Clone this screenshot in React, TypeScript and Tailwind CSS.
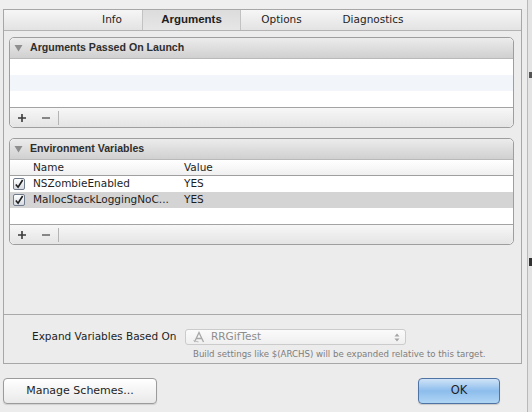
import React from 'react';

const font = { fontFamily: '"DejaVu Sans", "Liberation Sans", sans-serif' };
const boldFont = { fontFamily: '"Liberation Sans", Arial, sans-serif' };

function Triangle() {
  return (
    <svg aria-hidden="true" width="9" height="8" viewBox="0 0 9 8" className="shrink-0">
      <path d="M0.5 1h8L4.5 7.5z" fill="#8e8e8e" />
    </svg>
  );
}

function PanelHeader({ title }: { title: string }) {
  return (
    <div
      className="flex h-[21px] items-center gap-[7px] rounded-t-[5px] border-b border-[#b9b9b9] bg-gradient-to-b from-[#ececec] to-[#d0d0d0] pl-[4px] text-[10.6px] font-bold text-[#2e2e2e]"
      style={boldFont}
    >
      <Triangle />
      <span>{title}</span>
    </div>
  );
}

function PanelFooter() {
  return (
    <div className="flex h-[20px] items-center rounded-b-[5px] border-t border-[#a3a3a3] bg-gradient-to-b from-[#f7f7f7] to-[#e4e4e4] pl-[7px]">
      <svg aria-hidden="true" width="10" height="10" viewBox="0 0 10 10">
        <path d="M5 1v8M1 5h8" stroke="#3a3a3a" strokeWidth="1.6" />
      </svg>
      <svg aria-hidden="true" width="10" height="10" viewBox="0 0 10 10" className="ml-[14px]">
        <path d="M1 5h8" stroke="#5a5a5a" strokeWidth="1.4" />
      </svg>
      <div className="ml-[7px] h-[14px] w-px bg-[#b4b4b4]" />
    </div>
  );
}

function Check() {
  return (
    <div className="flex h-[12px] w-[12px] items-center justify-center rounded-[2px] border border-[#6f7b8c] bg-gradient-to-b from-[#ffffff] to-[#d6dbe2]">
      <svg aria-hidden="true" width="11" height="11" viewBox="0 0 11 11">
        <path d="M2 5.5l2.5 3L9.5 0.5" fill="none" stroke="#1f1f1f" strokeWidth="1.8" />
      </svg>
    </div>
  );
}

const envVars = [
  { name: 'NSZombieEnabled', value: 'YES', selected: false },
  { name: 'MallocStackLoggingNoC...', value: 'YES', selected: true }
];

export default function App() {
  return (
    <div className="flex h-[412px] w-[532px] overflow-hidden bg-[#ececec] text-[#1e1e1e]" style={font}>
      <div className="flex w-[527px] flex-col">
        <div className="h-[9px] bg-[#efefef]" />

        <div className="ml-[3px] flex h-[355px] w-[519px] flex-col border border-[#a7a7a7]">
          {/* tab bar */}
          <div className="flex h-[21px] border-b border-[#b3b3b3] bg-gradient-to-b from-[#f6f6f6] to-[#e3e3e3] pl-[78px] text-[10.5px]">
            <div className="flex w-[60px] items-center justify-center">Info</div>
            <div
              className="flex w-[99px] items-center justify-center border-x border-[#c2c2c2] bg-gradient-to-b from-[#dcdcdc] to-[#e6e6e6] text-[11.5px] font-bold"
              style={boldFont}
            >
              Arguments
            </div>
            <div className="flex w-[81px] items-center justify-center">Options</div>
            <div className="flex w-[102px] items-center justify-center">Diagnostics</div>
          </div>

          <div className="flex flex-1 flex-col pl-[5px] pr-[7px] pt-[6px]">
            {/* arguments panel */}
            <div className="rounded-[5px] border border-[#9e9e9e] bg-white">
              <PanelHeader title="Arguments Passed On Launch" />
              <div className="h-[16px] bg-white" />
              <div className="h-[16px] bg-[#f2f5fa]" />
              <div className="h-[16px] bg-white" />
              <PanelFooter />
            </div>

            {/* environment panel */}
            <div className="mt-[10px] rounded-[5px] border border-[#9e9e9e] bg-white">
              <PanelHeader title="Environment Variables" />
              <div className="flex h-[16px] items-center border-b border-[#9f9f9f] bg-gradient-to-b from-[#ffffff] to-[#f0f0f0] text-[10.5px]">
                <span className="w-[174px] pl-[23px]">Name</span>
                <span>Value</span>
              </div>
              {envVars.map((v) => (
                <div
                  key={v.name}
                  className={`flex h-[16px] items-center text-[10.5px] ${v.selected ? 'bg-[#d4d4d4]' : 'bg-white'}`}
                >
                  <div className="w-[23px] pl-[3px]">
                    <Check />
                  </div>
                  <span className="w-[151px] whitespace-nowrap">{v.name}</span>
                  <span>{v.value}</span>
                </div>
              ))}
              <div className="h-[16px] bg-white" />
              <PanelFooter />
            </div>

            <div className="flex-1" />
          </div>

          {/* expand variables section */}
          <div className="flex h-[49px] flex-col border-t border-[#a9a9a9] pl-[28px] pt-[14px]">
            <div className="flex items-center">
              <span className="w-[153px] text-[10.5px]">Expand Variables Based On</span>
              <div className="flex h-[16px] w-[221px] items-center rounded-[3px] border border-[#cbcbcb] bg-gradient-to-b from-[#fbfbfb] to-[#efefef] pl-[7px] pr-[5px] text-[10.5px] text-[#8d8d8d]">
                <svg aria-hidden="true" width="12" height="12" viewBox="0 0 12 12" className="mr-[6px]">
                  <path d="M1.5 11L6 1.5 10.5 11M3.5 7.5h5" fill="none" stroke="#a8a8a8" strokeWidth="1.3" />
                  <path d="M0.5 9.5l5 1.5" stroke="#bcbcbc" strokeWidth="1.2" />
                </svg>
                <span className="flex-1">RRGifTest</span>
                <svg aria-hidden="true" width="6" height="9" viewBox="0 0 6 9">
                  <path d="M3 0.5L5.5 3.5h-5zM3 8.5L0.5 5.5h5z" fill="#a5a5a5" />
                </svg>
              </div>
            </div>
            <div className="mt-[3px] whitespace-nowrap pl-[161px] text-[8.6px] text-[#7d7d7d]">
              Build settings like $(ARCHS) will be expanded relative to this target.
            </div>
          </div>
        </div>

        {/* buttons */}
        <div className="mt-[14px] flex items-start pl-[3px]">
          <button
            type="button"
            className="flex h-[26px] w-[154px] items-center justify-center rounded-[4px] border border-[#9b9b9b] bg-gradient-to-b from-[#ffffff] to-[#e9e9e9] text-[11px] shadow-[0_1px_1px_rgba(0,0,0,0.12)]"
          >
            Manage Schemes...
          </button>
          <button
            type="button"
            className="ml-[261px] flex h-[26px] w-[82px] items-center justify-center rounded-[4px] border border-[#4f73a3] bg-gradient-to-b from-[#cfe3f7] via-[#8dbdec] to-[#b0d5f5] text-[11.5px] shadow-[0_1px_1px_rgba(0,0,0,0.15)]"
          >
            OK
          </button>
        </div>
      </div>

      {/* edge of window behind */}
      <div className="relative w-[5px] border-l border-[#b9b9b9] bg-[#e4e4e4]">
        <div className="absolute left-[1px] top-[72px] h-[6px] w-[3px] bg-[#555]" />
        <div className="absolute left-[1px] top-[258px] h-[8px] w-[3px] bg-[#333]" />
      </div>
    </div>
  );
}
